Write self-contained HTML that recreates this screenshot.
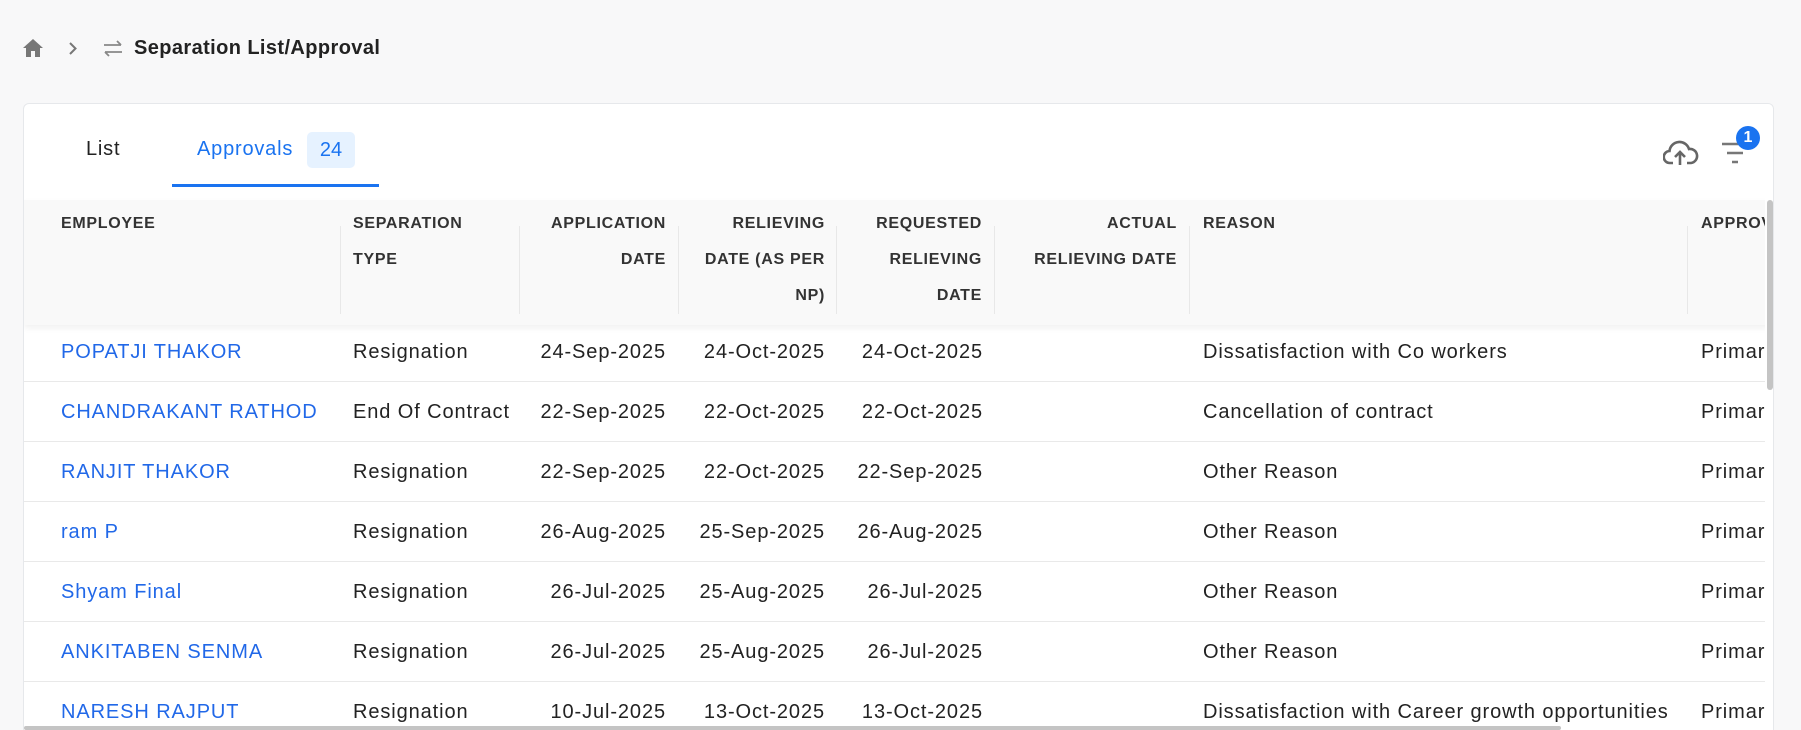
<!DOCTYPE html>
<html style="overflow:hidden;width:1801px;height:730px"><head><meta charset="utf-8"><style>
*{box-sizing:border-box;margin:0;padding:0}
body{width:1801px;height:730px;overflow:hidden;background:#f8f8f9;font-family:"Liberation Sans",Arial,sans-serif;color:#222;position:relative}
.abs{position:absolute;white-space:nowrap}
.card{position:absolute;left:23px;top:103px;width:1751px;height:627px;background:#fff;border:1px solid #e6e8eb;border-bottom:none;border-radius:6px 6px 0 0;overflow:hidden}
.hdr{position:absolute;left:0;top:96px;width:1745px;height:125px;background:#f9f9f9;box-shadow:0 3px 6px rgba(0,0,0,0.06)}
.h{position:absolute;font-size:16px;font-weight:bold;color:#333;line-height:36px;top:6px;letter-spacing:0.7px}
.r{text-align:right}
.div{position:absolute;top:26px;width:1px;height:88px;background:#e8e8e8}
.row{position:absolute;left:0;width:1745px;height:60px;border-bottom:1px solid #e9e9e9}
.c{position:absolute;top:0;line-height:60px;font-size:20px;letter-spacing:0.9px;color:#222;white-space:nowrap}
.n{color:#2168e8}
</style></head><body>
<svg class="abs" style="left:22px;top:38px" width="22" height="20" viewBox="0 0 22 20"><path d="M11 1 L1 10 H4 V19 H9 V13 H13 V19 H18 V10 H21 Z" fill="#777"/></svg>
<svg class="abs" style="left:68px;top:41px" width="10" height="15" viewBox="0 0 10 15"><path d="M2 2 L7.5 7.5 L2 13" fill="none" stroke="#777" stroke-width="2"/></svg>
<svg class="abs" style="left:103px;top:40px" width="20" height="17" viewBox="0 0 20 17"><path d="M1 5 H18 M14 1 L18 5 M19 12 H2 M6 16 L2 12" fill="none" stroke="#888" stroke-width="1.8"/></svg>
<div class="abs" style="left:134px;top:37px;font-size:20px;font-weight:bold;color:#222;letter-spacing:0.4px">Separation List/Approval</div>
<div class="card">
 <div class="abs" style="left:62px;top:34px;font-size:20px;color:#222;letter-spacing:0.8px">List</div>
 <div class="abs" style="left:173px;top:34px;font-size:20px;color:#1a73f0;letter-spacing:0.8px">Approvals</div>
 <div class="abs" style="left:283px;top:28px;width:48px;height:36px;background:#e6f2ff;border-radius:5px;color:#1a73f0;font-size:20px;line-height:36px;text-align:center">24</div>
 <div class="abs" style="left:148px;top:80px;width:207px;height:3px;background:#1a73f0"></div>
 <svg class="abs" style="left:1639px;top:34px" width="36" height="28" viewBox="0 0 36 28"><path d="M10 25 H7 A6 6 0 0 1 6.5 13 A10 10 0 0 1 26 11 A7 7 0 0 1 28 25 H24" fill="none" stroke="#666" stroke-width="2.6"/><path d="M17 27 V14 M12 19 L17 14 L22 19" fill="none" stroke="#666" stroke-width="2.6"/></svg>
 <svg class="abs" style="left:1697px;top:37px" width="30" height="26" viewBox="0 0 30 26"><path d="M1 3 H27 M6 12 H22 M11 21 H17" stroke="#777" stroke-width="2.4"/></svg>
 <div class="abs" style="left:1712px;top:22px;width:24px;height:24px;border-radius:50%;background:#1a73f0;color:#fff;font-size:16px;font-weight:bold;text-align:center;line-height:24px">1</div>
 <div class="hdr">
  <div class="h" style="left:37px">EMPLOYEE</div>
  <div class="h" style="left:329px">SEPARATION<br>TYPE</div>
  <div class="h r" style="left:470px;width:172px">APPLICATION<br>DATE</div>
  <div class="h r" style="left:630px;width:171px">RELIEVING<br>DATE (AS PER<br>NP)</div>
  <div class="h r" style="left:780px;width:178px">REQUESTED<br>RELIEVING<br>DATE</div>
  <div class="h r" style="left:960px;width:193px">ACTUAL<br>RELIEVING DATE</div>
  <div class="h" style="left:1179px">REASON</div>
  <div class="h" style="left:1677px">APPROVER</div>
  <div class="div" style="left:316px"></div><div class="div" style="left:495px"></div><div class="div" style="left:654px"></div><div class="div" style="left:812px"></div><div class="div" style="left:970px"></div><div class="div" style="left:1165px"></div><div class="div" style="left:1663px"></div>
 </div>
 <div style="position:absolute;left:0;top:218px">
  <div class="row" style="top:0"><div class="c n" style="left:37px">POPATJI THAKOR</div><div class="c" style="left:329px">Resignation</div><div class="c" style="right:1103px">24-Sep-2025</div><div class="c" style="right:944px">24-Oct-2025</div><div class="c" style="right:786px">24-Oct-2025</div><div class="c" style="left:1179px">Dissatisfaction with Co workers</div><div class="c" style="left:1677px">Primary</div></div>
  <div class="row" style="top:60px"><div class="c n" style="left:37px">CHANDRAKANT RATHOD</div><div class="c" style="left:329px">End Of Contract</div><div class="c" style="right:1103px">22-Sep-2025</div><div class="c" style="right:944px">22-Oct-2025</div><div class="c" style="right:786px">22-Oct-2025</div><div class="c" style="left:1179px">Cancellation of contract</div><div class="c" style="left:1677px">Primary</div></div>
  <div class="row" style="top:120px"><div class="c n" style="left:37px">RANJIT THAKOR</div><div class="c" style="left:329px">Resignation</div><div class="c" style="right:1103px">22-Sep-2025</div><div class="c" style="right:944px">22-Oct-2025</div><div class="c" style="right:786px">22-Sep-2025</div><div class="c" style="left:1179px">Other Reason</div><div class="c" style="left:1677px">Primary</div></div>
  <div class="row" style="top:180px"><div class="c n" style="left:37px">ram P</div><div class="c" style="left:329px">Resignation</div><div class="c" style="right:1103px">26-Aug-2025</div><div class="c" style="right:944px">25-Sep-2025</div><div class="c" style="right:786px">26-Aug-2025</div><div class="c" style="left:1179px">Other Reason</div><div class="c" style="left:1677px">Primary</div></div>
  <div class="row" style="top:240px"><div class="c n" style="left:37px">Shyam Final</div><div class="c" style="left:329px">Resignation</div><div class="c" style="right:1103px">26-Jul-2025</div><div class="c" style="right:944px">25-Aug-2025</div><div class="c" style="right:786px">26-Jul-2025</div><div class="c" style="left:1179px">Other Reason</div><div class="c" style="left:1677px">Primary</div></div>
  <div class="row" style="top:300px"><div class="c n" style="left:37px">ANKITABEN SENMA</div><div class="c" style="left:329px">Resignation</div><div class="c" style="right:1103px">26-Jul-2025</div><div class="c" style="right:944px">25-Aug-2025</div><div class="c" style="right:786px">26-Jul-2025</div><div class="c" style="left:1179px">Other Reason</div><div class="c" style="left:1677px">Primary</div></div>
  <div class="row" style="top:360px"><div class="c n" style="left:37px">NARESH RAJPUT</div><div class="c" style="left:329px">Resignation</div><div class="c" style="right:1103px">10-Jul-2025</div><div class="c" style="right:944px">13-Oct-2025</div><div class="c" style="right:786px">13-Oct-2025</div><div class="c" style="left:1179px">Dissatisfaction with Career growth opportunities</div><div class="c" style="left:1677px">Primary</div></div>
 </div>
 <div class="abs" style="left:1741px;top:0;width:10px;height:627px;background:#fff"></div>
 <div class="abs" style="left:1743px;top:96px;width:6px;height:190px;background:#c4c4c4;border-radius:3px"></div>
 <div class="abs" style="left:0;top:622px;width:1537px;height:4px;background:#c4c4c4;border-radius:2px"></div>
</div>
</body></html>
